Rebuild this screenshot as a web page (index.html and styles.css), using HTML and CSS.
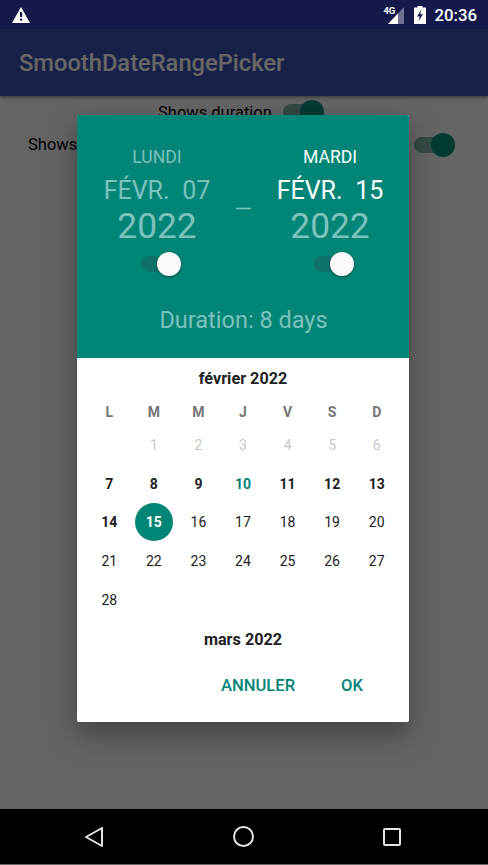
FILE: index.html
```html
<!DOCTYPE html>
<html lang="en">
<head>
    <title>SmoothDateRangePicker</title>
    <link rel="stylesheet" href="styles.css">
</head>
<body>
    <div class="status-bar">
        <svg class="warn-icon" width="18" height="16" viewBox="0 0 18 16">
            <path d="M9 0 L18 16 L0 16 Z" fill="#fff"/>
            <rect x="8" y="5" width="2.2" height="5" fill="#15194a"/>
            <rect x="8" y="11.5" width="2.2" height="2.2" fill="#15194a"/>
        </svg>
        <div class="status-right">
            <div class="signal">
                <span class="net-label">4G</span>
                <svg width="16" height="17" viewBox="0 0 16 17">
                    <path d="M16 0 L16 17 L0 17 Z" fill="#6f7193"/>
                    <path d="M10 6.4 L10 17 L0 17 Z" fill="#fff"/>
                </svg>
            </div>
            <svg class="battery" width="12" height="18" viewBox="0 0 12 18">
                <path d="M3.5 0 H8.5 V1.5 H12 V18 H0 V1.5 H3.5 Z" fill="#fff"/>
                <path d="M7 4 L3 10.5 H5.6 L4.8 15 L9 8.2 H6.3 Z" fill="#15194a"/>
            </svg>
            <span class="clock">20:36</span>
        </div>
    </div>

    <div class="main">
        <header class="app-bar">SmoothDateRangePicker</header>
        <div class="content">
            <div class="option-row option-center">
                <span>Shows duration</span>
                <span class="bg-switch"></span>
            </div>
            <div class="option-row option-wide">
                <span>Shows</span>
                <span class="bg-switch"></span>
            </div>
        </div>
        <div class="scrim"></div>

        <div class="dialog">
            <div class="dialog-head">
                <div class="range">
                    <div class="range-col">
                        <div class="weekday">LUNDI</div>
                        <div class="date">FÉVR. 07</div>
                        <div class="year">2022</div>
                        <span class="head-switch"></span>
                    </div>
                    <div class="dash">–</div>
                    <div class="range-col active">
                        <div class="weekday">MARDI</div>
                        <div class="date">FÉVR. 15</div>
                        <div class="year">2022</div>
                        <span class="head-switch"></span>
                    </div>
                </div>
                <div class="duration">Duration: 8 days</div>
            </div>

            <div class="calendar">
                <div class="month-title">février 2022</div>
                <div class="days">
                    <span class="dow">L</span><span class="dow">M</span><span class="dow">M</span><span class="dow">J</span><span class="dow">V</span><span class="dow">S</span><span class="dow">D</span>
                    <span></span><span class="off">1</span><span class="off">2</span><span class="off">3</span><span class="off">4</span><span class="off">5</span><span class="off">6</span>
                    <span class="in">7</span><span class="in">8</span><span class="in">9</span><span class="in today">10</span><span class="in">11</span><span class="in">12</span><span class="in">13</span>
                    <span class="in">14</span><span class="in picked">15</span><span>16</span><span>17</span><span>18</span><span>19</span><span>20</span>
                    <span>21</span><span>22</span><span>23</span><span>24</span><span>25</span><span>26</span><span>27</span>
                    <span>28</span>
                </div>
                <div class="month-title">mars 2022</div>
            </div>

            <div class="actions">
                <button class="action">ANNULER</button>
                <button class="action">OK</button>
            </div>
        </div>
    </div>

    <div class="nav-bar">
        <svg width="18" height="20" viewBox="0 0 18 20">
            <path d="M17 1 V19 L1 10 Z" fill="none" stroke="#e4e4e4" stroke-width="2" stroke-linejoin="round"/>
        </svg>
        <svg width="21" height="21" viewBox="0 0 21 21">
            <circle cx="10.5" cy="10.5" r="9.5" fill="none" stroke="#e4e4e4" stroke-width="2"/>
        </svg>
        <svg width="18" height="18" viewBox="0 0 18 18">
            <rect x="1" y="1" width="16" height="16" rx="1" fill="none" stroke="#e4e4e4" stroke-width="2"/>
        </svg>
    </div>
    <div class="bottom-edge"></div>
</body>
</html>
```

FILE: styles.css
```css
/* date range picker dialog over the demo screen */
* {
    box-sizing: border-box;
}

body {
    margin: 0;
    height: 865px;
    display: flex;
    flex-direction: column;
    font-family: Roboto, "Liberation Sans", sans-serif;
    overflow: hidden;
}

.status-bar {
    height: 29px;
    background-color: #15194a;
    display: flex;
    align-items: center;
    justify-content: space-between;
    padding: 0 11px 0 12px;
}

.status-right {
    display: flex;
    align-items: center;
}

.signal {
    display: flex;
    align-items: flex-end;
    position: relative;
    width: 20px;
    height: 18px;
    justify-content: flex-end;
    margin-right: 10px;
}

.net-label {
    position: absolute;
    left: -1px;
    top: -1px;
    font-size: 9.5px;
    font-weight: 700;
    color: #fff;
}

.clock {
    color: #fff;
    font-size: 16.8px;
    font-weight: 500;
    margin-left: 8px;
}

.main {
    flex: 1;
    display: flex;
    flex-direction: column;
    position: relative;
}

.app-bar {
    height: 67px;
    background-color: #3f51b5;
    color: #fff;
    font-size: 23.7px;
    font-weight: 500;
    display: flex;
    align-items: center;
    padding: 1px 0 0 19px;
    box-shadow: 0 1px 4px rgba(0, 0, 0, 0.5);
    position: relative;
}

.content {
    flex: 1;
    background-color: #fafafa;
    color: #000;
    font-size: 16.5px;
}

.option-row {
    display: flex;
    align-items: center;
}

.option-center {
    height: 32px;
    padding-left: 158px;
}

.option-center .bg-switch {
    margin-left: 11px;
}

.option-wide {
    height: 33px;
    justify-content: space-between;
    padding: 0 38px 0 28px;
}

.bg-switch {
    display: block;
    position: relative;
    width: 36px;
    height: 16px;
    border-radius: 8px;
    background-color: #7fb3ad;
}

.bg-switch::after {
    content: "";
    position: absolute;
    right: -5px;
    top: -4px;
    width: 24px;
    height: 24px;
    border-radius: 50%;
    background-color: #00957f;
}

.scrim {
    position: absolute;
    top: 0;
    left: 0;
    right: 0;
    bottom: 0;
    background-color: rgba(0, 0, 0, 0.6);
}

.dialog {
    position: absolute;
    top: 86px;
    left: 77px;
    width: 332px;
    height: 607px;
    background-color: #fff;
    border-radius: 2px;
    box-shadow: 0 12px 28px rgba(0, 0, 0, 0.35);
    display: flex;
    flex-direction: column;
}

.dialog-head {
    flex-shrink: 0;
    height: 243px;
    background-color: #008577;
    border-radius: 2px 2px 0 0;
    padding: 32px 0 0 1px;
    color: rgba(255, 255, 255, 0.5);
    text-align: center;
}

.range {
    display: flex;
}

.range-col {
    width: 158px;
}

.dash {
    width: 15px;
    display: flex;
    justify-content: center;
    font-size: 30px;
    font-weight: 300;
    line-height: 40px;
    padding-top: 42px;
}

.weekday {
    font-size: 17.6px;
    line-height: 21px;
}

.date {
    font-size: 25px;
    line-height: 31px;
    margin-top: 7px;
    word-spacing: 6.5px;
}

.year {
    font-size: 35.3px;
    line-height: 40px;
}

.active .weekday,
.active .date {
    color: #fff;
}

.head-switch {
    display: block;
    position: relative;
    width: 36px;
    height: 16px;
    border-radius: 8px;
    background-color: #0e7268;
    margin: 10px 0 0 63px;
}

.head-switch::after {
    content: "";
    position: absolute;
    right: -4px;
    top: -4px;
    width: 24px;
    height: 24px;
    border-radius: 50%;
    background-color: #fafafa;
    box-shadow: 0 1px 3px rgba(0, 0, 0, 0.4);
}

.duration {
    font-size: 23.5px;
    line-height: 28px;
    margin-top: 34px;
}

.calendar {
    flex: 1;
    padding: 0 10px;
}

.month-title {
    text-align: center;
    font-size: 16.2px;
    font-weight: 700;
    color: #212121;
    line-height: 20px;
    margin-top: 11px;
}

.days {
    display: grid;
    grid-template-columns: repeat(7, 1fr);
    grid-template-rows: 28px repeat(5, 38.7px);
    margin-top: 8.5px;
    color: #212121;
    font-size: 14px;
}

.days span {
    display: flex;
    align-items: center;
    justify-content: center;
}

.days .dow {
    color: #757575;
    font-weight: 700;
}

.days .off {
    color: #c8c8c8;
}

.days .in {
    font-weight: 700;
}

.days .today {
    color: #008577;
}

.days .picked {
    color: #fff;
    background-color: #008577;
    border-radius: 50%;
    width: 38px;
    height: 38px;
    justify-self: center;
}

.actions {
    flex-shrink: 0;
    display: flex;
    justify-content: flex-end;
    height: 72px;
    padding: 21px 46px 0 0;
    align-items: flex-start;
}

.action {
    border: none;
    background: none;
    padding: 0;
    color: #008577;
    font-family: inherit;
    font-size: 16.6px;
    font-weight: 500;
    line-height: 30px;
    margin-left: 46px;
}

.nav-bar {
    height: 55px;
    background-color: #000;
    display: flex;
    align-items: center;
    justify-content: space-between;
    padding: 0 87px 0 85px;
}

.bottom-edge {
    height: 1px;
    background-color: #666;
}
```
